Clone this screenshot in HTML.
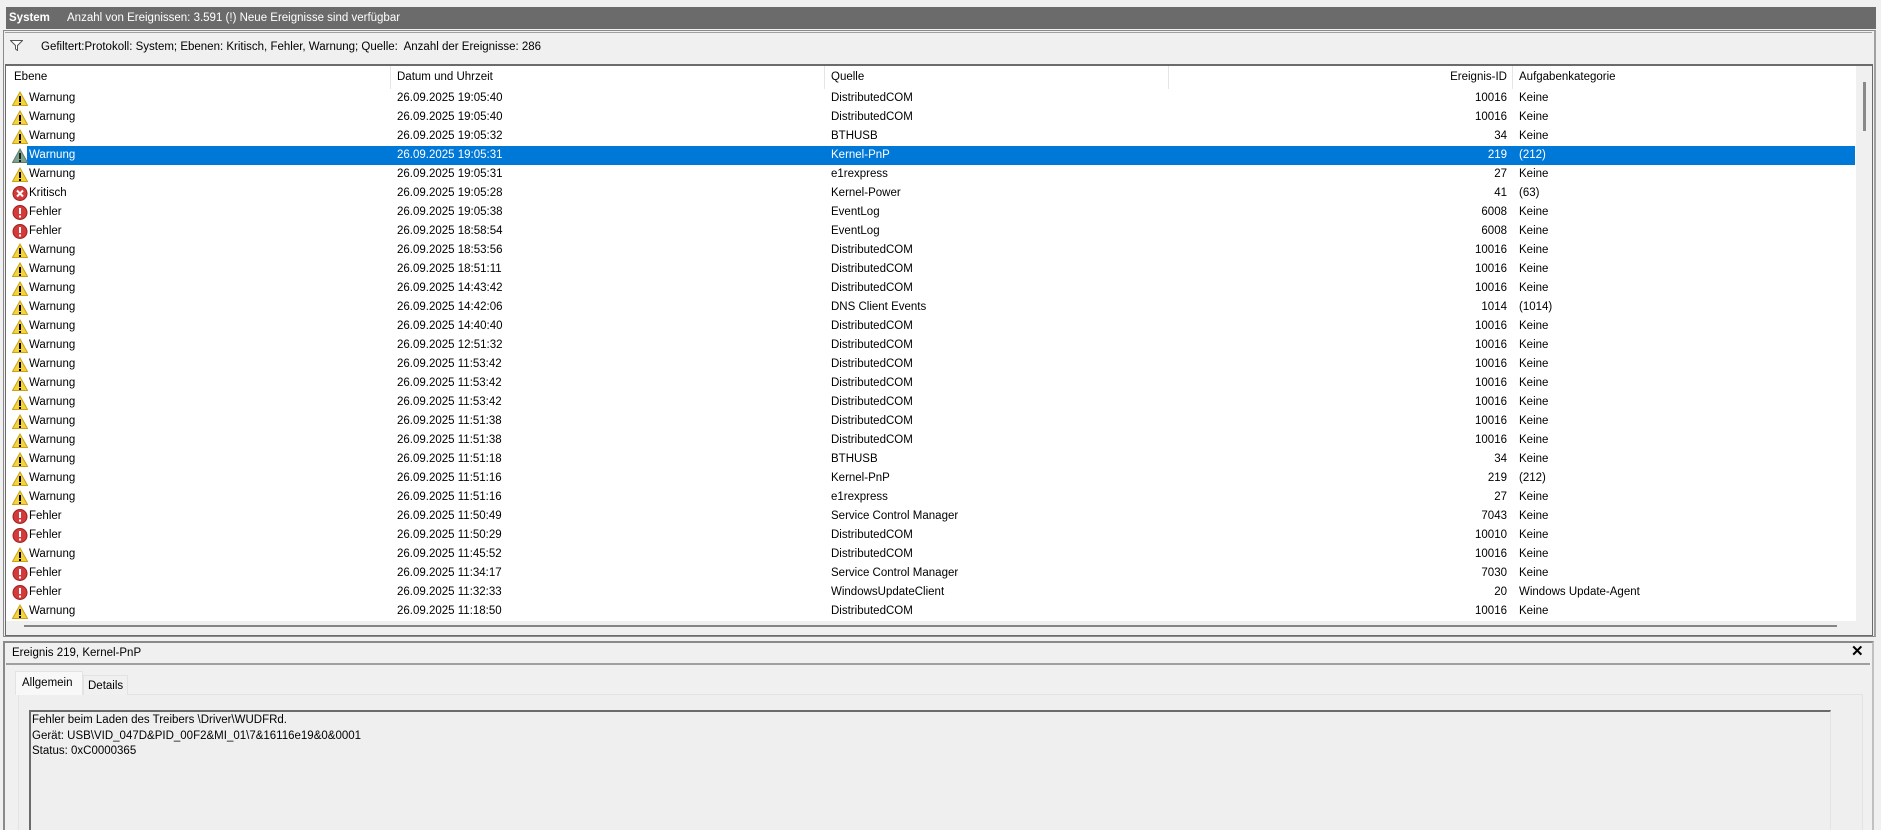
<!DOCTYPE html>
<html style="overflow:hidden;width:1881px;height:830px"><head><meta charset="utf-8"><style>
*{margin:0;padding:0;box-sizing:border-box}
body{width:1881px;height:830px;background:#f0f0f0;font-family:"Liberation Sans",Arial,sans-serif;font-size:11.5px;color:#000;position:relative;overflow:hidden}
.a{position:absolute;white-space:nowrap}
.row{position:absolute;left:6px;width:1849px;height:19px}
.row span{position:absolute;top:3px;line-height:13px}
.c1{left:23px}.c2{left:391px}.c3{left:825px}.c4{right:348px;text-align:right}.c5{left:1513px}
.ic{position:absolute;left:6px;top:2px;width:16px;height:15px}
</style></head><body>
<div class="a" style="left:6px;top:7px;width:1870px;height:22px;background:#6b6b6b"></div>
<div class="a" style="left:9px;top:10px;color:#fff;font-weight:bold;line-height:16px">System</div>
<div class="a" style="left:67px;top:10px;color:#fff;line-height:16px">Anzahl von Ereignissen: 3.591 (!) Neue Ereignisse sind verfügbar</div>
<div class="a" style="left:3px;top:30px;width:1873px;height:607px;border:1px solid #8a8a8a;border-right:2px solid #a0a0a0"></div>
<div class="a" style="left:5px;top:32px;width:1867px;height:1px;background:#a0a0a0"></div>
<svg class="a" style="left:10px;top:40px" width="13" height="11" viewBox="0 0 13 11"><path d="M0.5 0.5H12.5L7.5 5.5V10.5L5.5 9V5.5Z" fill="#fff" stroke="#555"/></svg>
<div class="a" style="left:41px;top:40px;line-height:14px">Gefiltert:Protokoll: System; Ebenen: Kritisch, Fehler, Warnung; Quelle:&nbsp; Anzahl der Ereignisse: 286</div>
<div class="a" style="left:5px;top:64px;width:1868px;height:572px;border:1px solid #6b6b6b;border-top:2px solid #6b6b6b;background:#f0f0f0"></div>
<div class="a" style="left:6px;top:66px;width:1850px;height:555px;background:#fff"></div>
<div class="a" style="left:1856px;top:66px;width:16px;height:569px;background:#f0f0f0"></div>
<div class="a" style="left:1863px;top:82px;width:3px;height:49px;background:#8a8a8a"></div>
<div class="a" style="left:24px;top:625px;width:1813px;height:2px;background:#858585"></div>
<div class="a" style="left:390px;top:66px;width:1px;height:23px;background:#e5e5e5"></div>
<div class="a" style="left:824px;top:66px;width:1px;height:23px;background:#e5e5e5"></div>
<div class="a" style="left:1168px;top:66px;width:1px;height:23px;background:#e5e5e5"></div>
<div class="a" style="left:1512px;top:66px;width:1px;height:23px;background:#e5e5e5"></div>
<div class="a" style="left:14px;top:71px">Ebene</div>
<div class="a" style="left:397px;top:71px">Datum und Uhrzeit</div>
<div class="a" style="left:831px;top:71px">Quelle</div>
<div class="a" style="left:1420px;top:71px;width:87px;text-align:right">Ereignis-ID</div>
<div class="a" style="left:1519px;top:71px">Aufgabenkategorie</div>
<svg width="0" height="0" style="position:absolute"><defs>
<g id="w"><path d="M8 1L15.5 14.5H0.5Z" fill="#f5d33a" stroke="#c9a21a"/><rect x="7" y="5" width="2" height="6" fill="#000"/><rect x="7" y="12" width="2" height="2" fill="#000"/></g>
<g id="ws"><path d="M8 1L15.5 14.5H0.5Z" fill="#7fa08e" stroke="#5d7d6a"/><rect x="7" y="5" width="2" height="6" fill="#10201a"/><rect x="7" y="12" width="2" height="2" fill="#10201a"/></g>
<g id="e"><circle cx="8" cy="7.5" r="7" fill="#d43a3a" stroke="#9a2020"/><rect x="7" y="3" width="2" height="6" fill="#fff"/><rect x="7" y="10.5" width="2" height="2" fill="#fff"/></g>
<g id="k"><circle cx="8" cy="7.5" r="7" fill="#d43a3a" stroke="#9a2020"/><path d="M5 4.5L11 10.5M11 4.5L5 10.5" stroke="#fff" stroke-width="2"/></g>
</defs></svg>
<div class="row" style="top:89px"><svg class="ic"><use href="#w"/></svg><span class="c1">Warnung</span><span class="c2">26.09.2025 19:05:40</span><span class="c3">DistributedCOM</span><span class="c4">10016</span><span class="c5">Keine</span></div>
<div class="row" style="top:108px"><svg class="ic"><use href="#w"/></svg><span class="c1">Warnung</span><span class="c2">26.09.2025 19:05:40</span><span class="c3">DistributedCOM</span><span class="c4">10016</span><span class="c5">Keine</span></div>
<div class="row" style="top:127px"><svg class="ic"><use href="#w"/></svg><span class="c1">Warnung</span><span class="c2">26.09.2025 19:05:32</span><span class="c3">BTHUSB</span><span class="c4">34</span><span class="c5">Keine</span></div>
<div class="row" style="top:146px;color:#fff"><div style="position:absolute;left:21px;right:0;top:0;bottom:0;background:#0078d7"></div><svg class="ic"><use href="#ws"/></svg><span class="c1">Warnung</span><span class="c2">26.09.2025 19:05:31</span><span class="c3">Kernel-PnP</span><span class="c4">219</span><span class="c5">(212)</span></div>
<div class="row" style="top:165px"><svg class="ic"><use href="#w"/></svg><span class="c1">Warnung</span><span class="c2">26.09.2025 19:05:31</span><span class="c3">e1rexpress</span><span class="c4">27</span><span class="c5">Keine</span></div>
<div class="row" style="top:184px"><svg class="ic"><use href="#k"/></svg><span class="c1">Kritisch</span><span class="c2">26.09.2025 19:05:28</span><span class="c3">Kernel-Power</span><span class="c4">41</span><span class="c5">(63)</span></div>
<div class="row" style="top:203px"><svg class="ic"><use href="#e"/></svg><span class="c1">Fehler</span><span class="c2">26.09.2025 19:05:38</span><span class="c3">EventLog</span><span class="c4">6008</span><span class="c5">Keine</span></div>
<div class="row" style="top:222px"><svg class="ic"><use href="#e"/></svg><span class="c1">Fehler</span><span class="c2">26.09.2025 18:58:54</span><span class="c3">EventLog</span><span class="c4">6008</span><span class="c5">Keine</span></div>
<div class="row" style="top:241px"><svg class="ic"><use href="#w"/></svg><span class="c1">Warnung</span><span class="c2">26.09.2025 18:53:56</span><span class="c3">DistributedCOM</span><span class="c4">10016</span><span class="c5">Keine</span></div>
<div class="row" style="top:260px"><svg class="ic"><use href="#w"/></svg><span class="c1">Warnung</span><span class="c2">26.09.2025 18:51:11</span><span class="c3">DistributedCOM</span><span class="c4">10016</span><span class="c5">Keine</span></div>
<div class="row" style="top:279px"><svg class="ic"><use href="#w"/></svg><span class="c1">Warnung</span><span class="c2">26.09.2025 14:43:42</span><span class="c3">DistributedCOM</span><span class="c4">10016</span><span class="c5">Keine</span></div>
<div class="row" style="top:298px"><svg class="ic"><use href="#w"/></svg><span class="c1">Warnung</span><span class="c2">26.09.2025 14:42:06</span><span class="c3">DNS Client Events</span><span class="c4">1014</span><span class="c5">(1014)</span></div>
<div class="row" style="top:317px"><svg class="ic"><use href="#w"/></svg><span class="c1">Warnung</span><span class="c2">26.09.2025 14:40:40</span><span class="c3">DistributedCOM</span><span class="c4">10016</span><span class="c5">Keine</span></div>
<div class="row" style="top:336px"><svg class="ic"><use href="#w"/></svg><span class="c1">Warnung</span><span class="c2">26.09.2025 12:51:32</span><span class="c3">DistributedCOM</span><span class="c4">10016</span><span class="c5">Keine</span></div>
<div class="row" style="top:355px"><svg class="ic"><use href="#w"/></svg><span class="c1">Warnung</span><span class="c2">26.09.2025 11:53:42</span><span class="c3">DistributedCOM</span><span class="c4">10016</span><span class="c5">Keine</span></div>
<div class="row" style="top:374px"><svg class="ic"><use href="#w"/></svg><span class="c1">Warnung</span><span class="c2">26.09.2025 11:53:42</span><span class="c3">DistributedCOM</span><span class="c4">10016</span><span class="c5">Keine</span></div>
<div class="row" style="top:393px"><svg class="ic"><use href="#w"/></svg><span class="c1">Warnung</span><span class="c2">26.09.2025 11:53:42</span><span class="c3">DistributedCOM</span><span class="c4">10016</span><span class="c5">Keine</span></div>
<div class="row" style="top:412px"><svg class="ic"><use href="#w"/></svg><span class="c1">Warnung</span><span class="c2">26.09.2025 11:51:38</span><span class="c3">DistributedCOM</span><span class="c4">10016</span><span class="c5">Keine</span></div>
<div class="row" style="top:431px"><svg class="ic"><use href="#w"/></svg><span class="c1">Warnung</span><span class="c2">26.09.2025 11:51:38</span><span class="c3">DistributedCOM</span><span class="c4">10016</span><span class="c5">Keine</span></div>
<div class="row" style="top:450px"><svg class="ic"><use href="#w"/></svg><span class="c1">Warnung</span><span class="c2">26.09.2025 11:51:18</span><span class="c3">BTHUSB</span><span class="c4">34</span><span class="c5">Keine</span></div>
<div class="row" style="top:469px"><svg class="ic"><use href="#w"/></svg><span class="c1">Warnung</span><span class="c2">26.09.2025 11:51:16</span><span class="c3">Kernel-PnP</span><span class="c4">219</span><span class="c5">(212)</span></div>
<div class="row" style="top:488px"><svg class="ic"><use href="#w"/></svg><span class="c1">Warnung</span><span class="c2">26.09.2025 11:51:16</span><span class="c3">e1rexpress</span><span class="c4">27</span><span class="c5">Keine</span></div>
<div class="row" style="top:507px"><svg class="ic"><use href="#e"/></svg><span class="c1">Fehler</span><span class="c2">26.09.2025 11:50:49</span><span class="c3">Service Control Manager</span><span class="c4">7043</span><span class="c5">Keine</span></div>
<div class="row" style="top:526px"><svg class="ic"><use href="#e"/></svg><span class="c1">Fehler</span><span class="c2">26.09.2025 11:50:29</span><span class="c3">DistributedCOM</span><span class="c4">10010</span><span class="c5">Keine</span></div>
<div class="row" style="top:545px"><svg class="ic"><use href="#w"/></svg><span class="c1">Warnung</span><span class="c2">26.09.2025 11:45:52</span><span class="c3">DistributedCOM</span><span class="c4">10016</span><span class="c5">Keine</span></div>
<div class="row" style="top:564px"><svg class="ic"><use href="#e"/></svg><span class="c1">Fehler</span><span class="c2">26.09.2025 11:34:17</span><span class="c3">Service Control Manager</span><span class="c4">7030</span><span class="c5">Keine</span></div>
<div class="row" style="top:583px"><svg class="ic"><use href="#e"/></svg><span class="c1">Fehler</span><span class="c2">26.09.2025 11:32:33</span><span class="c3">WindowsUpdateClient</span><span class="c4">20</span><span class="c5">Windows Update-Agent</span></div>
<div class="row" style="top:602px;height:19px;overflow:hidden"><svg class="ic"><use href="#w"/></svg><span class="c1">Warnung</span><span class="c2">26.09.2025 11:18:50</span><span class="c3">DistributedCOM</span><span class="c4">10016</span><span class="c5">Keine</span></div>
<div class="a" style="left:3px;top:641px;width:1871px;height:189px;border-left:2px solid #8a8a8a;border-top:2px solid #8a8a8a;border-right:2px solid #c0c0c0"></div>
<div class="a" style="left:12px;top:646px;line-height:14px">Ereignis 219, Kernel-PnP</div>
<div class="a" style="left:1851px;top:643px;font-size:15px;font-weight:bold;line-height:18px">✕</div>
<div class="a" style="left:6px;top:663px;width:1864px;height:2px;background:#a0a0a0"></div>
<div class="a" style="left:18px;top:694px;width:1845px;height:136px;border:1px solid #e3e3e3;border-bottom:none;background:#efefef"></div>
<div class="a" style="left:15px;top:671px;width:68px;height:24px;border:1px solid #e3e3e3;border-bottom:none;background:#f8f8f8"></div>
<div class="a" style="left:22px;top:676px;line-height:14px">Allgemein</div>
<div class="a" style="left:83px;top:675px;width:45px;height:20px;border:1px solid #e3e3e3;border-bottom:none;background:#f0f0f0"></div>
<div class="a" style="left:88px;top:679px;line-height:14px">Details</div>
<div class="a" style="left:29px;top:710px;width:1802px;height:120px;border-top:2px solid #6b6b6b;border-left:2px solid #6b6b6b;border-right:1px solid #e3e3e3;background:#efefef"></div>
<div class="a" style="left:32px;top:713px;line-height:15.5px">Fehler beim Laden des Treibers \Driver\WUDFRd.<br>Gerät: USB\VID_047D&amp;PID_00F2&amp;MI_01\7&amp;16116e19&amp;0&amp;0001<br>Status: 0xC0000365</div>
</body></html>
